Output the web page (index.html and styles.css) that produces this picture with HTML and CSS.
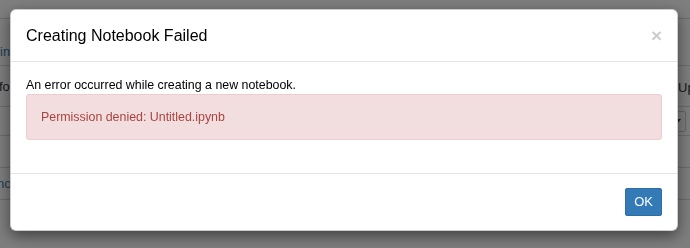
FILE: index.html
```html
<!DOCTYPE html>
<html>
<head>
<meta charset="utf-8">
<title>Creating Notebook Failed</title>
<link rel="stylesheet" href="styles.css">
</head>
<body>
<div class="page">
  <div class="row row-top"></div>
  <div class="row row-tabs"><span class="lt link">Running</span></div>
  <div class="row row-tools"><span class="lt">for</span><span class="rt">Upload</span></div>
  <div class="row row-btn"><span class="lt"></span><span class="rt"><span class="dd">New <span class="caret"></span></span></span></div>
  <div class="row row-empty"></div>
  <div class="row row-item"><span class="lt link">notebooks</span></div>
</div>
<div class="backdrop"></div>
<div class="modal" role="dialog">
  <div class="modal-header">
    <button class="close" type="button">×</button>
    <h4 class="modal-title">Creating Notebook Failed</h4>
  </div>
  <div class="modal-body">
    <p class="msg">An error occurred while creating a new notebook.</p>
    <div class="alert">Permission denied: Untitled.ipynb</div>
  </div>
  <div class="modal-footer">
    <button class="btn" type="button">OK</button>
  </div>
</div>
</body>
</html>
```

FILE: styles.css
```css
* { box-sizing: border-box; }
html, body {
  margin: 0;
  padding: 0;
}
body {
  width: 690px;
  height: 248px;
  overflow: hidden;
  background: #fff;
  font-family: "Liberation Sans", Arial, sans-serif;
  font-size: 13px;
  color: #000;
}

/* underlying page */
.page {
  width: 690px;
}
.row {
  display: flex;
  justify-content: space-between;
  align-items: center;
  border-bottom: 1px solid #d8d8d8;
}
.row-top { height: 19px; }
.row-tabs { height: 47px; align-items: flex-end; padding-bottom: 6px; }
.row-tools { height: 41px; }
.row-btn { height: 29px; }
.row-empty { height: 32px; }
.row-item { height: 32px; }
.lt {
  margin-left: -3px;
  white-space: nowrap;
  color: #333;
}
.row-tabs .lt { margin-left: -31px; }
.row-tools .lt { margin-left: -1px; }
.link { color: #337ab7; }
.rt {
  display: flex;
  width: 12px;
  white-space: nowrap;
  color: #333;
  overflow: visible;
}
.row-tools .rt { padding-top: 3px; }
.dd {
  display: inline-flex;
  align-items: center;
  gap: 4px;
  margin-left: -44px;
  height: 21px;
  padding: 0 4px 0 8px;
  border: 1px solid #ccc;
  border-radius: 2px;
}
.caret {
  display: inline-block;
  width: 0;
  height: 0;
  border-top: 5px solid #333;
  border-left: 4px solid transparent;
  border-right: 4px solid transparent;
}

.backdrop {
  position: fixed;
  inset: 0;
  background: rgba(0, 0, 0, 0.5);
}

/* modal */
.modal {
  position: absolute;
  left: 10px;
  top: 9px;
  width: 668px;
  background: #fff;
  border: 1px solid rgba(0, 0, 0, 0.2);
  border-radius: 6px;
  box-shadow: 0 5px 15px rgba(0, 0, 0, 0.5);
}
.modal-header {
  padding: 15px;
  border-bottom: 1px solid #e5e5e5;
}
.modal-title {
  margin: 0;
  font-size: 16px;
  line-height: 21px;
  font-weight: normal;
  color: #000;
}
.close {
  float: right;
  margin: 0;
  padding: 0;
  border: 0;
  background: transparent;
  font-family: "Liberation Sans", Arial, sans-serif;
  font-size: 19px;
  font-weight: bold;
  line-height: 21px;
  color: #000;
  opacity: 0.2;
}
.modal-body {
  padding: 15px;
}
.msg {
  margin: 0;
  font-size: 12.4px;
  line-height: 17px;
}
.alert {
  margin-bottom: 18px;
  padding: 14px;
  font-size: 12.4px;
  line-height: 16px;
  color: #a94442;
  background: #f2dede;
  border: 1px solid #ebccd1;
  border-radius: 3px;
}
.modal-footer {
  display: flex;
  justify-content: flex-end;
  padding: 14px 15px;
  border-top: 1px solid #e5e5e5;
}
.btn {
  font-family: "Liberation Sans", Arial, sans-serif;
  font-size: 13px;
  line-height: 18px;
  padding: 4px 8px;
  color: #fff;
  background: #337ab7;
  border: 1px solid #2e6da4;
  border-radius: 2px;
}
```
